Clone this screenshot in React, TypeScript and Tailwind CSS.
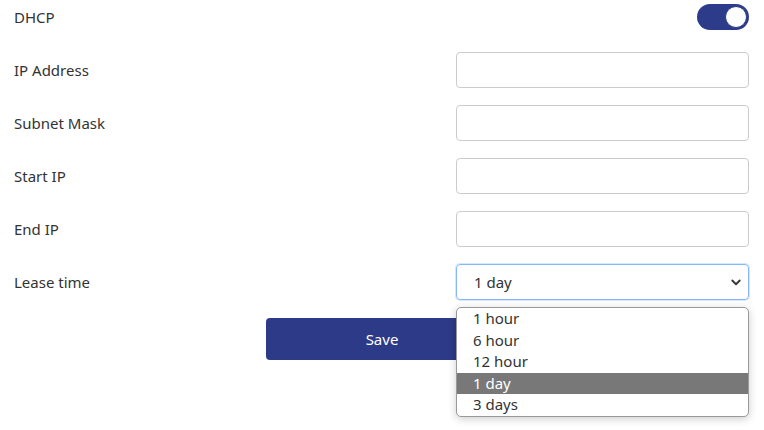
import React, { useState } from "react";

const fields: string[] = ["IP Address", "Subnet Mask", "Start IP", "End IP"];
const leaseOptions: string[] = ["1 hour", "6 hour", "12 hour", "1 day", "3 days"];

export default function App() {
  const [dhcp, setDhcp] = useState(true);
  const [lease, setLease] = useState("1 day");

  return (
    <div className="w-[764px] h-[430px] bg-white text-[15px] text-[#333] font-['Noto_Sans','Liberation_Sans',sans-serif] pl-[14px] pr-[15px] relative">
      <div className="flex items-center h-[34px]">
        <span className="flex-1">DHCP</span>
        <button
          onClick={() => setDhcp(!dhcp)}
          className={"w-[52px] h-[26px] rounded-full flex items-center px-[2px] " + (dhcp ? "bg-[#2d3c8a] justify-end" : "bg-gray-300 justify-start")}
        >
          <span className="w-[22px] h-[22px] rounded-full bg-white border border-[#2d3c8a]" />
        </button>
      </div>

      <div className="flex flex-col gap-[17px] mt-[18px]">
        {fields.map((label) => (
          <div key={label} className="flex items-center h-[36px]">
            <span className="flex-1">{label}</span>
            <input className="w-[293px] h-[36px] border border-[#ccc] rounded-[4px] px-3 outline-none" />
          </div>
        ))}
        <div className="flex items-center h-[36px]">
          <span className="flex-1">Lease time</span>
          <div className="w-[293px] h-[36px] border border-[#86b7fe] rounded-[4px] flex items-center pl-[17px] pr-[6px] shadow-[0_0_0_1px_rgba(134,183,254,0.35)]">
            <span className="flex-1">{lease}</span>
            <svg width="12" height="12" viewBox="0 0 16 16">
              <path d="M3 6l5 5 5-5" fill="none" stroke="#333" strokeWidth="2.4" strokeLinecap="round" strokeLinejoin="round" />
            </svg>
          </div>
        </div>
      </div>

      <div className="mt-[18px] pl-[252px]">
        <button className="w-[232px] h-[42px] rounded-[4px] bg-[#2d3a87] text-white">Save</button>
      </div>

      <div className="absolute left-[456px] top-[307px] w-[293px] border border-[#999] rounded-[5px] bg-white shadow-[0_2px_8px_rgba(0,0,0,0.2)] overflow-hidden">
        {leaseOptions.map((opt) => (
          <div
            key={opt}
            onClick={() => setLease(opt)}
            className={"h-[21.6px] leading-[21.6px] pl-[16px] " + (opt === lease ? "bg-[#787878] text-white" : "text-[#333]")}
          >
            {opt}
          </div>
        ))}
      </div>
    </div>
  );
}
